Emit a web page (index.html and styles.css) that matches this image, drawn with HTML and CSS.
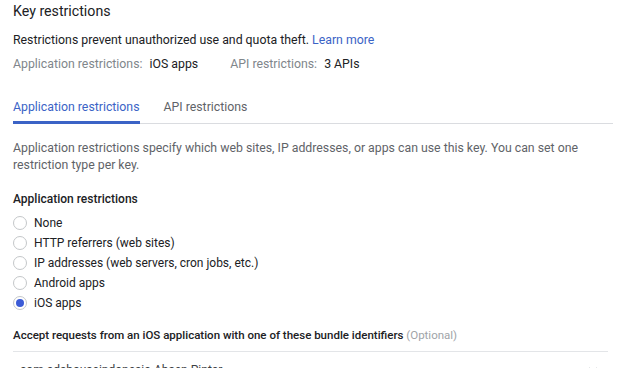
FILE: index.html
```html
<!DOCTYPE html>
<html>
<head>
<meta charset="utf-8">
<link rel="stylesheet" href="styles.css">
</head>
<body>
<div class="page">
  <h2 class="title">Key restrictions</h2>
  <p class="intro">Restrictions prevent unauthorized use and quota theft. <a class="link">Learn more</a></p>
  <div class="summary">
    <span class="sum-item"><span class="sum-label">Application restrictions:</span> <span class="sum-value">iOS apps</span></span>
    <span class="sum-item"><span class="sum-label">API restrictions:</span> <span class="sum-value">3 APIs</span></span>
  </div>
  <div class="tabs">
    <div class="tab active">Application restrictions</div>
    <div class="tab">API restrictions</div>
  </div>
  <p class="desc">Application restrictions specify which web sites, IP addresses, or apps can use this key. You can set one restriction type per key.</p>
  <h3 class="section">Application restrictions</h3>
  <div class="radios">
    <label class="radio"><span class="circle"></span>None</label>
    <label class="radio"><span class="circle"></span>HTTP referrers (web sites)</label>
    <label class="radio"><span class="circle"></span>IP addresses (web servers, cron jobs, etc.)</label>
    <label class="radio"><span class="circle"></span>Android apps</label>
    <label class="radio"><span class="circle checked"></span>iOS apps</label>
  </div>
  <div class="accept">Accept requests from an iOS application with one of these bundle identifiers <span class="optional">(Optional)</span></div>
  <div class="bundle">
    <span class="bundle-text">com.adshouseindonesia.Absen.Pintar</span>
    <svg class="chev" width="10" height="6" viewBox="0 0 10 6"><path d="M1 1l4 4 4-4" fill="none" stroke="#9aa0a6" stroke-width="1.2"/></svg>
  </div>
</div>
</body>
</html>
```
FILE: styles.css
```css
html, body { margin: 0; padding: 0; background: #fff; }
body { font-family: Roboto, "Liberation Sans", Arial, sans-serif; color: #202124; overflow: hidden; }
.page { padding: 0 17px 0 13px; }
.title { font-size: 14.2px; font-weight: 400; margin: 0; padding-top: 3px; line-height: 17px; }
.intro { font-size: 12.3px; margin: 12px 0 0; line-height: 16px; }
.link { color: #3b63c6; text-decoration: none; }
.summary { display: flex; gap: 32px; font-size: 12.3px; margin-top: 8px; line-height: 16px; }
.sum-label { color: #80868b; }
.sum-value { color: #202124; margin-left: 4px; }
.tabs { display: flex; gap: 24px; margin-top: 27px; border-bottom: 1px solid #dadce0; }
.tab { font-size: 12.3px; color: #5f6368; line-height: 16px; padding-bottom: 6px; border-bottom: 3px solid transparent; margin-bottom: -1px; }
.tab.active { color: #3b63c6; border-bottom-color: #3b63c6; }
.desc { font-size: 12.3px; color: #5f6368; line-height: 17px; margin: 16px 0 0; }
.section { font-size: 12px; font-weight: 500; margin: 17px 0 0; line-height: 16px; }
.radios { display: flex; flex-direction: column; margin-top: 6px; }
.radio { display: flex; align-items: center; gap: 7px; font-size: 12px; line-height: 20px; height: 20px; }
.circle { width: 12px; height: 12px; border: 1px solid #c4c7c9; border-radius: 50%; box-sizing: content-box; position: relative; }
.circle.checked::after { content: ""; position: absolute; left: 2px; top: 2px; width: 8px; height: 8px; border-radius: 50%; background: #3b5bd6; }
.accept { font-size: 11.5px; font-weight: 500; margin-top: 15px; line-height: 14px; }
.optional { color: #a0a4a8; font-weight: 400; }
.bundle { display: flex; justify-content: space-between; align-items: center; border-top: 1px solid #e3e5e8; margin-top: 9px; padding: 11px 10px 0 7px; font-size: 12px; color: #3c4043; width: 578px; box-sizing: content-box; }
.chev { margin-top: 0; }
```
